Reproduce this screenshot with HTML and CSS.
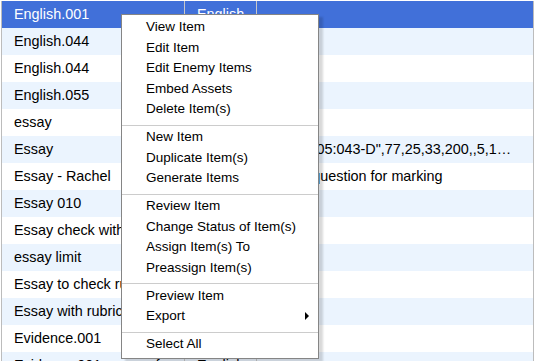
FILE: index.html
```html
<!DOCTYPE html>
<html>
<head>
    <title>Item Bank</title>
    <link rel="stylesheet" href="styles.css">
</head>
<body>
    <div class="item-grid">
        <div class="row selected"><div class="cell">English.001</div><div class="cell">English</div><div class="cell"></div></div>
        <div class="row alt"><div class="cell">English.044</div><div class="cell">English</div><div class="cell"></div></div>
        <div class="row"><div class="cell">English.044</div><div class="cell">English</div><div class="cell"></div></div>
        <div class="row alt"><div class="cell">English.055</div><div class="cell">English</div><div class="cell"></div></div>
        <div class="row"><div class="cell">essay</div><div class="cell">English</div><div class="cell"></div></div>
        <div class="row alt"><div class="cell">Essay</div><div class="cell">English</div><div class="cell">"ELA.G05:043-D",77,25,33,200,,5,10,0,0,12,4</div></div>
        <div class="row"><div class="cell">Essay - Rachel</div><div class="cell">English</div><div class="cell">Essay question for marking</div></div>
        <div class="row alt"><div class="cell">Essay 010</div><div class="cell">English</div><div class="cell"></div></div>
        <div class="row"><div class="cell">Essay check with rubric</div><div class="cell">English</div><div class="cell"></div></div>
        <div class="row alt"><div class="cell">essay limit</div><div class="cell">English</div><div class="cell"></div></div>
        <div class="row"><div class="cell">Essay to check rubric</div><div class="cell">English</div><div class="cell"></div></div>
        <div class="row alt"><div class="cell">Essay with rubric</div><div class="cell">English</div><div class="cell"></div></div>
        <div class="row"><div class="cell">Evidence.001</div><div class="cell">English</div><div class="cell"></div></div>
        <div class="row alt"><div class="cell">Evidence.001 - essay format</div><div class="cell">English</div><div class="cell"></div></div>
    </div>

    <!-- context menu -->
    <div class="context-menu">
        <div class="menu-item">View Item</div>
        <div class="menu-item">Edit Item</div>
        <div class="menu-item">Edit Enemy Items</div>
        <div class="menu-item">Embed Assets</div>
        <div class="menu-item">Delete Item(s)</div>
        <div class="menu-sep"></div>
        <div class="menu-item">New Item</div>
        <div class="menu-item">Duplicate Item(s)</div>
        <div class="menu-item">Generate Items</div>
        <div class="menu-sep"></div>
        <div class="menu-item">Review Item</div>
        <div class="menu-item">Change Status of Item(s)</div>
        <div class="menu-item">Assign Item(s) To</div>
        <div class="menu-item">Preassign Item(s)</div>
        <div class="menu-sep"></div>
        <div class="menu-item">Preview Item</div>
        <div class="menu-item has-sub">Export<span class="sub-arrow"></span></div>
        <div class="menu-sep"></div>
        <div class="menu-item">Select All</div>
    </div>
</body>
</html>
```
FILE: styles.css
```css
html, body { margin: 0; padding: 0; background: #fff; overflow: hidden; }
body { font-family: "Liberation Sans", Arial, sans-serif; color: #000; }

.item-grid {
    margin: 1px 0 0 1px;
    width: 533px;
    box-sizing: border-box;
    border-left: 1px solid #bcbcbc;
    border-right: 1px solid #bcbcbc;
}
.row {
    display: grid;
    grid-template-columns: 183px 72px 1fr;
    height: 27px;
    background: #fff;
}
.row.alt { background: #ebf4fe; }
.row.selected { background: #4170d9; color: #fff; }
.cell {
    padding: 0 4px 0 12px;
    font-size: 14.4px;
    line-height: 27px;
    white-space: nowrap;
    overflow: hidden;
    text-overflow: ellipsis;
    border-right: 1px solid #c8c8c8;
}
.cell:last-child { border-right: none; padding-right: 18px; }

.context-menu {
    position: absolute;
    left: 121px;
    top: 14px;
    width: 198px;
    box-sizing: border-box;
    background: #fff;
    border: 1px solid #858585;
    padding: 2px 0 3px;
    box-shadow: 4px 3px 2px rgba(0, 0, 0, 0.15);
}
.menu-item {
    position: relative;
    padding-left: 24px;
    font-size: 13.5px;
    line-height: 20.5px;
    height: 20.5px;
    white-space: nowrap;
    color: #000;
}
.menu-sep {
    height: 1px;
    background: #cccccc;
    margin: 5px 0 1.5px;
}
.sub-arrow {
    position: absolute;
    right: 9px;
    top: 6px;
    width: 0;
    height: 0;
    border-left: 4px solid #000;
    border-top: 4px solid transparent;
    border-bottom: 4px solid transparent;
}
```
